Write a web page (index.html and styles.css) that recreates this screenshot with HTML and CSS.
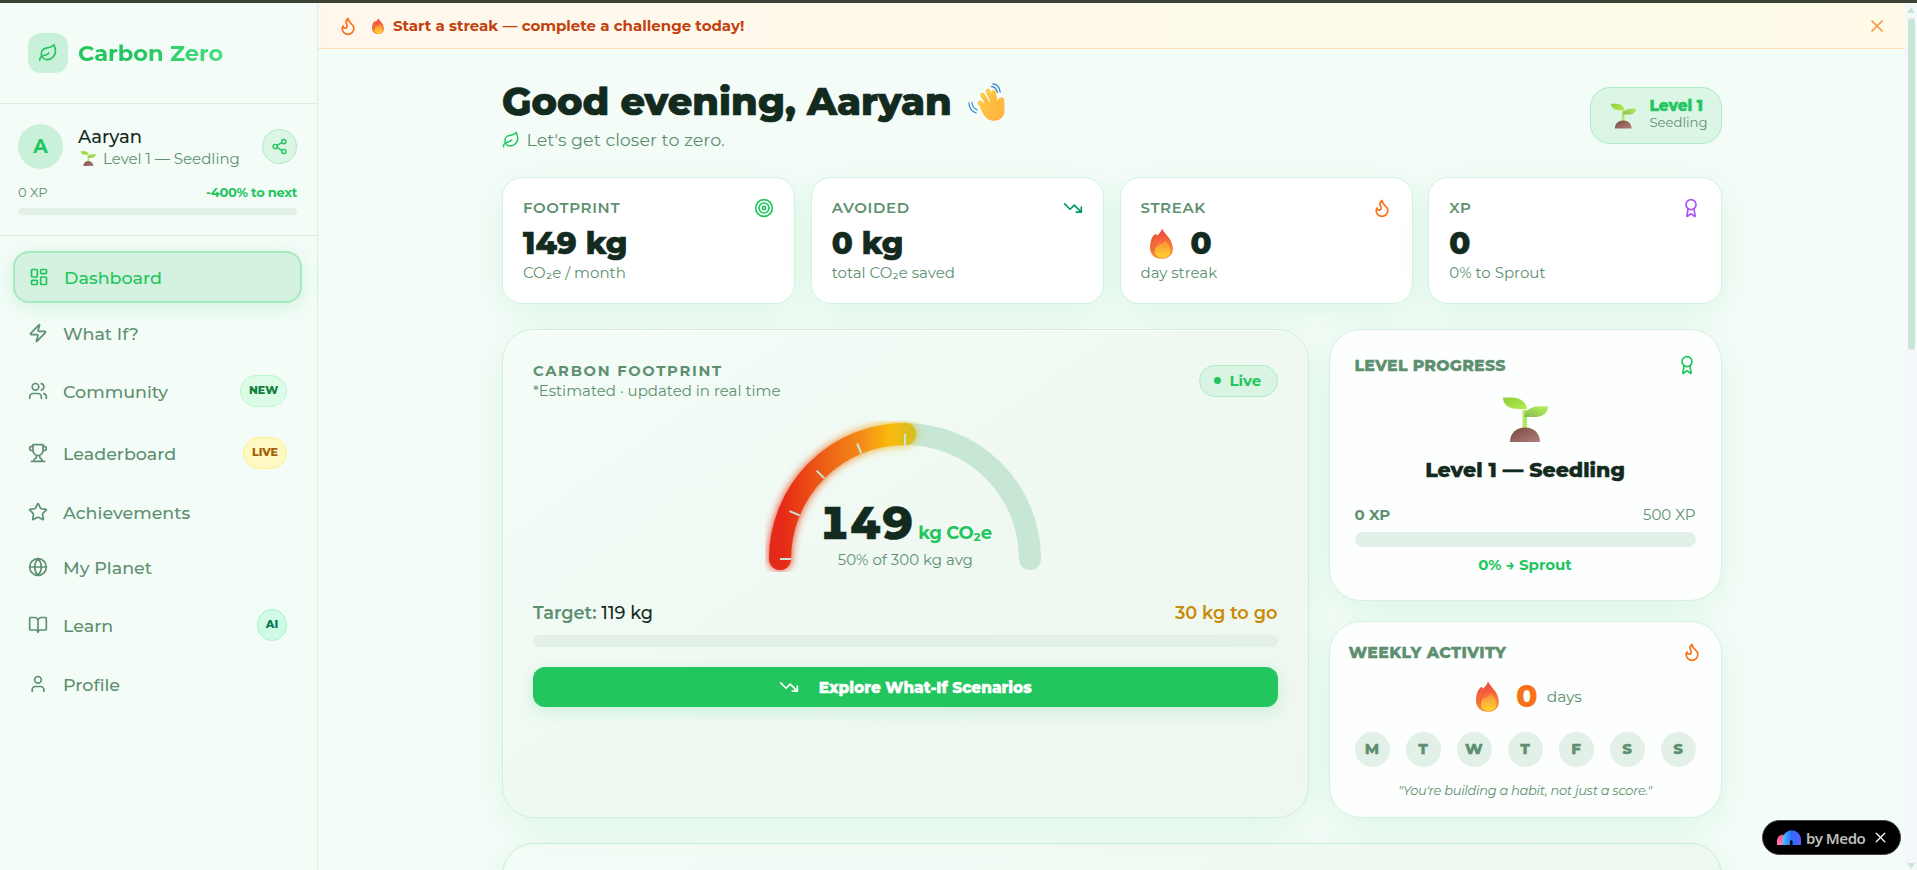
FILE: index.html
```html
<!DOCTYPE html>
<html lang="en">
<head>
<meta charset="utf-8">
<title>Carbon Zero</title>
<link rel="stylesheet" href="styles.css">
</head>
<body>
<svg class="defs" width="0" height="0" aria-hidden="true">
  <defs>
    <linearGradient id="leafA" x1="0" y1="0" x2="1" y2="1"><stop offset="0" stop-color="#8fce35"/><stop offset="1" stop-color="#b4ec55"/></linearGradient>
    <linearGradient id="leafB" x1="0" y1="1" x2="1" y2="0"><stop offset="0" stop-color="#86bb50"/><stop offset="1" stop-color="#b9f25c"/></linearGradient>
    <linearGradient id="soil" x1="0" y1="0" x2="1" y2="1"><stop offset="0" stop-color="#76483f"/><stop offset="1" stop-color="#b27f7b"/></linearGradient>
    <linearGradient id="fireA" x1="0" y1="0" x2="0" y2="1"><stop offset="0" stop-color="#ee3f3c"/><stop offset=".5" stop-color="#f9703c"/><stop offset="1" stop-color="#fb8f35"/></linearGradient>
    <linearGradient id="fireB" x1="0" y1="0" x2="0" y2="1"><stop offset="0" stop-color="#fb8a3a"/><stop offset="1" stop-color="#ffd62e"/></linearGradient>
    <linearGradient id="hand" gradientUnits="userSpaceOnUse" x1="8" y1="6" x2="34" y2="36"><stop offset="0" stop-color="#ffcf4a"/><stop offset="1" stop-color="#ffb23c"/></linearGradient>
  </defs>
  <symbol id="i-leaf" viewBox="0 0 24 24"><path d="M11 20A7 7 0 0 1 9.8 6.1C15.5 5 17 4.48 19 2c1 2 2 4.18 2 8 0 5.5-4.78 10-10 10Z"/><path d="M2 21c0-3 1.85-5.36 5.08-6C9.5 14.52 12 13 13 12"/></symbol>
  <symbol id="i-flame" viewBox="0 0 24 24"><path d="M8.5 14.5A2.5 2.5 0 0 0 11 12c0-1.38-.5-2-1-3-1.072-2.143-.224-4.054 2-6 .5 2.5 2 4.9 4 6.5 2 1.6 3 3.5 3 5.5a7 7 0 1 1-14 0c0-1.153.433-2.294 1-3a2.5 2.5 0 0 0 2.5 2.5z"/></symbol>
  <symbol id="i-x" viewBox="0 0 24 24"><path d="M18 6 6 18M6 6l12 12"/></symbol>
  <symbol id="i-share" viewBox="0 0 24 24"><circle cx="18" cy="5" r="3"/><circle cx="6" cy="12" r="3"/><circle cx="18" cy="19" r="3"/><path d="M8.59 13.51l6.83 3.98M15.41 6.51l-6.82 3.98"/></symbol>
  <symbol id="i-dash" viewBox="0 0 24 24"><rect width="7" height="9" x="3" y="3" rx="1"/><rect width="7" height="5" x="14" y="3" rx="1"/><rect width="7" height="9" x="14" y="12" rx="1"/><rect width="7" height="5" x="3" y="16" rx="1"/></symbol>
  <symbol id="i-zap" viewBox="0 0 24 24"><path d="M4 14a1 1 0 0 1-.78-1.63l9.9-10.2a.5.5 0 0 1 .86.46l-1.92 6.02A1 1 0 0 0 13 10h7a1 1 0 0 1 .78 1.63l-9.9 10.2a.5.5 0 0 1-.86-.46l1.92-6.02A1 1 0 0 0 11 14z"/></symbol>
  <symbol id="i-users" viewBox="0 0 24 24"><path d="M16 21v-2a4 4 0 0 0-4-4H6a4 4 0 0 0-4 4v2"/><circle cx="9" cy="7" r="4"/><path d="M22 21v-2a4 4 0 0 0-3-3.87M16 3.13a4 4 0 0 1 0 7.75"/></symbol>
  <symbol id="i-trophy" viewBox="0 0 24 24"><path d="M6 9H4.5a2.5 2.5 0 0 1 0-5H6M18 9h1.5a2.5 2.5 0 0 0 0-5H18M4 22h16M10 14.66V17c0 .55-.47.98-.97 1.21C7.85 18.75 7 20.24 7 22M14 14.66V17c0 .55.47.98.97 1.21C16.15 18.75 17 20.24 17 22M18 2H6v7a6 6 0 0 0 12 0V2Z"/></symbol>
  <symbol id="i-star" viewBox="0 0 24 24"><path d="M11.525 2.295a.53.53 0 0 1 .95 0l2.31 4.679a2.123 2.123 0 0 0 1.595 1.16l5.166.756a.53.53 0 0 1 .294.904l-3.736 3.638a2.123 2.123 0 0 0-.611 1.878l.882 5.14a.53.53 0 0 1-.771.56l-4.618-2.428a2.122 2.122 0 0 0-1.973 0L6.396 21.01a.53.53 0 0 1-.77-.56l.881-5.139a2.122 2.122 0 0 0-.611-1.879L2.16 9.795a.53.53 0 0 1 .294-.906l5.165-.755a2.122 2.122 0 0 0 1.597-1.16z"/></symbol>
  <symbol id="i-globe" viewBox="0 0 24 24"><circle cx="12" cy="12" r="10"/><path d="M12 2a14.5 14.5 0 0 0 0 20 14.5 14.5 0 0 0 0-20M2 12h20"/></symbol>
  <symbol id="i-book" viewBox="0 0 24 24"><path d="M12 7v14M3 18a1 1 0 0 1-1-1V4a1 1 0 0 1 1-1h5a4 4 0 0 1 4 4 4 4 0 0 1 4-4h5a1 1 0 0 1 1 1v13a1 1 0 0 1-1 1h-6a3 3 0 0 0-3 3 3 3 0 0 0-3-3z"/></symbol>
  <symbol id="i-user" viewBox="0 0 24 24"><path d="M19 21v-2a4 4 0 0 0-4-4H9a4 4 0 0 0-4 4v2"/><circle cx="12" cy="7" r="4"/></symbol>
  <symbol id="i-target" viewBox="0 0 24 24"><circle cx="12" cy="12" r="10"/><circle cx="12" cy="12" r="6"/><circle cx="12" cy="12" r="2"/></symbol>
  <symbol id="i-down" viewBox="0 0 24 24"><path d="m22 17-8.5-8.5-5 5L2 7M16 17h6v-6"/></symbol>
  <symbol id="i-award" viewBox="0 0 24 24"><path d="m15.477 12.89 1.515 8.526a.5.5 0 0 1-.81.47l-3.58-2.687a1 1 0 0 0-1.197 0l-3.586 2.686a.5.5 0 0 1-.81-.469l1.514-8.526"/><circle cx="12" cy="8" r="6"/></symbol>
  <symbol id="e-seedling" viewBox="0 0 45 45"><path d="M19.600 13h4.400v20h-4.400z" fill="#b4e862"/><path d="M0 .6h9C17.500 1 23 5 24 12h-9C6 12 0 8 0 .6z" fill="url(#leafA)"/><path d="M45 9.200h-8C28 9.500 21.200 13 21.200 20h9C39 20 45 17 45 9.200z" fill="url(#leafB)"/><path d="M7 45C7 36 13.500 30.600 22 30.600S37 36 37 45z" fill="url(#soil)"/></symbol>
  <symbol id="e-fire" viewBox="0 0 24 32"><path d="M12.500 0c1 5 10.500 9.500 11.300 20.500C24.300 28 19 32 12.500 32 6 32 0 28.500 0 20.500 0 14 1.800 8.500 5.500 6c1 0 1.500.8 2 1.800C9.500 5.500 12 3.500 12.500 0z" fill="url(#fireA)"/><path d="M4.500 9C2.200 13 1 18 2.500 24M10 10C5.500 14 4 19 4.500 25" fill="none" stroke="#d84a35" stroke-width=".9" opacity=".65"/><path d="M16.500 12.500c.4 2.500 5 5 5 10.500 0 5-3.500 8-8 8s-8.500-2.300-8.500-7.500c0-6 7.500-6.500 11.500-11z" fill="url(#fireB)"/></symbol>
  <symbol id="e-wave" viewBox="0 0 38 38"><g stroke="url(#hand)" stroke-linecap="round" fill="none"><path d="M12 20l9 10M14.500 12l9 14M20 8l7 15" stroke-width="4.600"/><path d="M25.500 9l3.500 15" stroke-width="4.300"/></g><path d="M10 20l20-2c.2-4 6-5.500 6.300-.5.3 5 0 8 .2 10.500.2 5-4 9.800-10.200 9.800-5.500 0-8-2.300-11-6.500z" fill="url(#hand)"/><path d="M15.500 14.500l6 9M19.500 10.500l5.500 10M24.500 11l3.500 9M30 25c-1-3 0-5.500 1.500-8" fill="none" stroke="#ee9635" stroke-width=".8" opacity=".6"/><g fill="none" stroke="#3c8fd6" stroke-width="1.300" stroke-linecap="round"><path d="M1 20c0 4.500 3 9 7 9.800M4 19.500c.3 3.500 1.800 6 5 7.300M25 1c4 0 6.500 3.500 7.200 8M23.500 3.500c3.500.2 5 2.500 6 6"/></g></symbol>
</svg>

<div class="topline"></div>
<div class="app">
  <aside class="side">
    <div class="brand">
      <span class="brand-mark"><svg class="ic s20"><use href="#i-leaf"/></svg></span>
      <span class="brand-name">Carbon Zero</span>
    </div>
    <div class="profile">
      <div class="who">
        <span class="avatar">A</span>
        <div class="who-text">
          <div class="who-name">Aaryan</div>
          <div class="who-level"><svg class="seed-xs"><use href="#e-seedling"/></svg><span>Level 1 — Seedling</span></div>
        </div>
        <span class="share"><svg class="ic s17"><use href="#i-share"/></svg></span>
      </div>
      <div class="xp-row"><span class="xp-now">0 XP</span><b class="xp-next">-400% to next</b></div>
      <div class="xp-bar"></div>
    </div>
    <nav class="nav">
      <a class="item active"><svg class="ic s20"><use href="#i-dash"/></svg><span>Dashboard</span></a>
      <a class="item"><svg class="ic s20"><use href="#i-zap"/></svg><span>What If?</span></a>
      <a class="item tall"><svg class="ic s20"><use href="#i-users"/></svg><span>Community</span><i class="tag new">NEW</i></a>
      <a class="item tall"><svg class="ic s20"><use href="#i-trophy"/></svg><span>Leaderboard</span><i class="tag live">LIVE</i></a>
      <a class="item"><svg class="ic s20"><use href="#i-star"/></svg><span>Achievements</span></a>
      <a class="item"><svg class="ic s20"><use href="#i-globe"/></svg><span>My Planet</span></a>
      <a class="item tall"><svg class="ic s20"><use href="#i-book"/></svg><span>Learn</span><i class="tag ai">AI</i></a>
      <a class="item"><svg class="ic s20"><use href="#i-user"/></svg><span>Profile</span></a>
    </nav>
  </aside>

  <div class="main">
    <div class="banner">
      <svg class="ic s20 orange"><use href="#i-flame"/></svg>
      <svg class="fire-xs"><use href="#e-fire"/></svg>
      <b class="banner-text">Start a streak — complete a challenge today!</b>
      <svg class="ic s20 banner-x"><use href="#i-x"/></svg>
    </div>
    <div class="content">
      <header class="head">
        <div>
          <h1 class="hello"><span>Good evening, Aaryan</span><svg class="wave"><use href="#e-wave"/></svg></h1>
          <p class="sub"><svg class="ic s18 green"><use href="#i-leaf"/></svg><span>Let's get closer to zero.</span></p>
        </div>
        <div class="rank"><svg class="seed-sm"><use href="#e-seedling"/></svg><div><b class="rank-lv">Level 1</b><span class="rank-nm">Seedling</span></div></div>
      </header>

      <section class="stats">
        <div class="stat"><div class="stat-top"><span>FOOTPRINT</span><svg class="ic s20 green"><use href="#i-target"/></svg></div><div class="val">149 kg</div><div class="note">CO₂e / month</div></div>
        <div class="stat"><div class="stat-top"><span>AVOIDED</span><svg class="ic s20 teal"><use href="#i-down"/></svg></div><div class="val">0 kg</div><div class="note">total CO₂e saved</div></div>
        <div class="stat"><div class="stat-top"><span>STREAK</span><svg class="ic s20 orange"><use href="#i-flame"/></svg></div><div class="val"><svg class="fire-md"><use href="#e-fire"/></svg>0</div><div class="note">day streak</div></div>
        <div class="stat"><div class="stat-top"><span>XP</span><svg class="ic s20 purple"><use href="#i-award"/></svg></div><div class="val">0</div><div class="note">0% to Sprout</div></div>
      </section>

      <section class="panels">
        <div class="carbon">
          <div class="carbon-head">
            <div><div class="carbon-title">CARBON FOOTPRINT</div><div class="carbon-sub">*Estimated · updated in real time</div></div>
            <span class="pill"><i class="dot"></i>Live</span>
          </div>
          <div class="gauge">
            <svg class="gauge-arc" width="280" height="151" viewBox="765 421 280 151">
              <defs>
                <linearGradient id="heat" gradientUnits="userSpaceOnUse" x1="765" y1="0" x2="925" y2="0">
                  <stop offset="0" stop-color="#e4271c"/><stop offset=".13" stop-color="#e62d19"/><stop offset=".2" stop-color="#e93c16"/><stop offset=".42" stop-color="#ee6917"/><stop offset=".6" stop-color="#f48a16"/><stop offset=".78" stop-color="#fbbb0e"/><stop offset=".84" stop-color="#eebc14"/><stop offset=".96" stop-color="#cdbf24"/>
                </linearGradient>
                <filter id="glow" filterUnits="userSpaceOnUse" x="745" y="400" width="200" height="200"><feGaussianBlur stdDeviation="4" result="b"/><feMerge><feMergeNode in="b"/><feMergeNode in="SourceGraphic"/></feMerge></filter>
              </defs>
              <g fill="none" stroke-width="22" stroke-linecap="round">
                <path d="M780 559A125 125 0 0 1 1030 559" stroke="#c8e6d4"/>
                <path d="M780 559A125 125 0 0 1 905 434" stroke="url(#heat)" filter="url(#glow)"/>
              </g>
              <path d="M780 559h11M789.500 511.200l10.200 4.200M816.600 470.600l7.800 7.800M857.200 443.500l4.200 10.200M905 434v11" fill="none" stroke="#c8e6d4" stroke-width="2"/>
            </svg>
            <div class="gauge-text"><div class="reading"><b class="num">149</b><span class="unit">kg CO₂e</span></div><div class="avg">50% of 300 kg avg</div></div>
          </div>
          <div class="goal"><span>Target: <em>119 kg</em></span><span class="togo">30 kg to go</span></div>
          <div class="goal-bar"></div>
          <div class="cta"><svg class="ic s20"><use href="#i-down"/></svg><b>Explore What-If Scenarios</b></div>
        </div>

        <div class="rail">
          <div class="progress">
            <div class="rail-head"><b>LEVEL PROGRESS</b><svg class="ic s20 green"><use href="#i-award"/></svg></div>
            <svg class="seed-lg"><use href="#e-seedling"/></svg>
            <div class="lv">Level 1 — Seedling</div>
            <div class="lv-row"><b>0 XP</b><span>500 XP</span></div>
            <div class="lv-bar"></div>
            <div class="lv-next">0% → Sprout</div>
          </div>
          <div class="weekly">
            <div class="rail-head"><b>WEEKLY ACTIVITY</b><svg class="ic s20 orange"><use href="#i-flame"/></svg></div>
            <div class="days"><svg class="fire-md2"><use href="#e-fire"/></svg><b>0</b><span>days</span></div>
            <div class="week"><i>M</i><i>T</i><i>W</i><i>T</i><i>F</i><i>S</i><i>S</i></div>
            <div class="quote">"You're building a habit, not just a score."</div>
          </div>
        </div>
      </section>
      <section class="next"></section>
    </div>
  </div>

  <div class="scroll"><i class="up"></i><i class="thumb"></i><i class="down"></i></div>
</div>

<div class="medo">
  <svg width="24" height="15" viewBox="0 0 24 15"><defs><linearGradient id="m1" x1="0" y1="0" x2="1" y2="0"><stop offset="0" stop-color="#4cc3ff"/><stop offset=".5" stop-color="#2b6bff"/><stop offset="1" stop-color="#5b5cff"/></linearGradient><linearGradient id="m2" x1="0" y1="0" x2="0" y2="1"><stop offset="0" stop-color="#ff4f8b"/><stop offset="1" stop-color="#ff7eb6"/></linearGradient></defs><path d="M0 15v-4a6 6 0 0 1 8-6v10z" fill="url(#m2)"/><path d="M5.500 15V9.500a9.200 9.200 0 0 1 18.500 0V15h-8.500v-3.500a1.200 1.200 0 0 0-2.400 0V15z" fill="url(#m1)"/></svg>
  <span>by Medo</span>
  <svg class="ic medo-x"><use href="#i-x"/></svg>
</div>
</body>
</html>
```
FILE: styles.css
```css
* { box-sizing: border-box; }
html, body { margin: 0; height: 870px; overflow: hidden; }
body { background: #f4fcf8; font-family: Montserrat, Inter, sans-serif; color: #5d8f70; }
h1, p { margin: 0; }
i, em { font-style: normal; }
svg { display: block; flex: none; }
.defs { position: absolute; }
.ic { fill: none; stroke: currentColor; stroke-width: 2; stroke-linecap: round; stroke-linejoin: round; }
.s17 { width: 17px; height: 17px; }
.s18 { width: 18px; height: 18px; }
.s20 { width: 20px; height: 20px; }
.green { color: #22c55e; }
.teal { color: #059669; }
.orange { color: #f97316; }
.purple { color: #a855f7; }

.topline { height: 3px; background: #3b4336; }
.app { display: flex; height: 867px; }

.side { width: 318px; flex: none; border-right: 1px solid #d8efe2; }
.brand { height: 101px; padding: 30px 28px; display: flex; gap: 10px; border-bottom: 1px solid #d8efe2; }
.brand-mark { width: 40px; height: 40px; border-radius: 13px; background: #c9f1d9; color: #22c55e; display: grid; place-items: center; }
.brand-name { font-size: 22.500px; line-height: 40px; font-weight: 700; background: linear-gradient(90deg, #22c55e 40%, #4ade80); -webkit-background-clip: text; background-clip: text; color: transparent; }
.profile { height: 132px; padding: 20px 20px 0 18px; border-bottom: 1px solid #d8efe2; }
.who { display: flex; align-items: center; height: 45px; }
.avatar { width: 45px; height: 45px; border-radius: 50%; background: #c9f1d9; color: #22c55e; font-weight: 700; font-size: 19px; display: grid; place-items: center; }
.who-text { margin-left: 15px; flex: 1; padding-top: 2px; }
.who-name { font-size: 18px; font-weight: 550; line-height: 22px; color: #132a1e; }
.who-level { display: flex; align-items: center; font-size: 15px; line-height: 22px; font-weight: 400; gap: 7px; padding-left: 3px; white-space: nowrap; }
.seed-xs { width: 15px; height: 15px; }
.share { width: 35px; height: 35px; border-radius: 50%; border: 1px solid #b0ebc6; background: #dcf6e6; color: #22c55e; display: grid; place-items: center; }
.xp-row { display: flex; justify-content: space-between; font-size: 13px; line-height: 20px; margin-top: 13px; }
.xp-next { color: #22c55e; font-weight: 700; font-size: 13px; letter-spacing: -.3px; }
.xp-bar { height: 7px; border-radius: 4px; background: #e3f0e7; margin-top: 6px; }

.nav { padding: 15px 15px 0 13px; display: flex; flex-direction: column; gap: 4px; }
.item { display: flex; align-items: center; height: 51px; padding: 0 15px; gap: 15px; font-size: 17.500px; font-weight: 500; border-radius: 16px; }
.item span { flex: 1; padding-top: 1px; }
.item.tall { height: 58px; }
.item.active { height: 52px; padding-left: 14px; border: 2px solid #a5e9be; background: #d4f2df; color: #22c55e; box-shadow: 0 4px 20px rgba(34,197,94,.16); }
.tag { height: 32px; border-radius: 16px; padding: 0 8px; border: 1px solid; font-size: 11px; font-weight: 850; line-height: 29px; letter-spacing: 0; text-align: center; }
.new { width: 47px; color: #15803d; background: #dcfce7; border-color: #bbf7d0; }
.live { width: 44px; color: #a16207; background: #fef9c3; border-color: #fef08a; }
.ai { width: 30px; color: #047857; background: #d1fae5; border-color: #a7f3d0; padding: 0; }

.main { flex: 1; min-width: 0; overflow: hidden; }
.banner { height: 46px; display: flex; align-items: center; padding: 0 18px 0 20px; background: linear-gradient(90deg, #fff7ed, #fffbeb 60%, #fffbe8); border-bottom: 1px solid #fee0b8; }
.fire-xs { width: 12px; height: 16px; margin-left: 14px; }
.banner-text { flex: 1; margin-left: 9px; color: #c2410c; font-size: 15px; font-weight: 700; }
.banner-x { color: #fb923c; width: 20px; }
.content { width: 1219.500px; margin-left: 184px; padding-top: 31px; }
.head { display: flex; justify-content: space-between; height: 76px; }
.hello { display: flex; align-items: center; gap: 16px; font-size: 38.300px; line-height: 44px; font-weight: 800; color: #132a1e; -webkit-text-stroke: .7px #132a1e; }
.wave { width: 38px; height: 38px; }
.sub { display: flex; align-items: center; gap: 6.500px; font-size: 17.550px; line-height: 32px; font-weight: 400; }
.rank { margin-top: 7px; width: 132px; height: 57px; border-radius: 20px; border: 1px solid #b0ebc6; background: #dcf6e6; display: flex; align-items: center; padding-left: 20px; gap: 14px; }
.seed-sm { width: 25px; height: 26px; }
.rank-lv { display: block; color: #22c55e; font-size: 15.300px; font-weight: 850; line-height: 16px; -webkit-text-stroke: .4px #22c55e; }
.rank-nm { display: block; font-size: 13.200px; font-weight: 400; line-height: 16px; margin-bottom: 3px; }

.stats { display: grid; grid-template-columns: repeat(4, 1fr); gap: 15.500px; margin-top: 21px; }
.stat { height: 127px; padding: 20px; background: #fff; border: 1px solid #d3f3df; border-radius: 20px; box-shadow: 0 8px 32px rgba(34,197,94,.11); }
.stat-top { display: flex; justify-content: space-between; align-items: center; height: 20px; font-size: 15px; line-height: 19px; font-weight: 650; letter-spacing: .65px; }
.stat-top span { padding-bottom: 1px; }
.val { display: flex; align-items: center; height: 36px; margin-top: 7px; font-size: 30.700px; font-weight: 800; color: #132a1e; -webkit-text-stroke: .6px #132a1e; }
.fire-md { width: 23px; height: 31px; margin: 0 18px 0 9px; }
.note { font-size: 15px; line-height: 20px; margin-top: 2px; font-weight: 400; }

.panels { display: grid; grid-template-columns: 1fr 393px; gap: 20px; margin-top: 25px; height: 489px; }
.carbon { padding: 30px; border: 1px solid #d3ecdd; border-radius: 32px; background: linear-gradient(145deg, #f4fdf8, #eff9f2 50%, #eef7f0); box-shadow: 0 8px 32px rgba(34,197,94,.11), inset 0 1px 0 rgba(255,255,255,.8); }
.carbon-head { display: flex; justify-content: space-between; align-items: center; height: 41px; }
.carbon-title { font-size: 14.700px; line-height: 20px; font-weight: 700; letter-spacing: 1.720px; }
.carbon-sub { font-size: 15px; line-height: 20px; font-weight: 400; }
.pill { width: 79px; height: 32px; border-radius: 16px; border: 1px solid #b0ebc6; background: #daf4e4; color: #22c55e; display: flex; align-items: center; gap: 9px; padding-left: 14px; font-size: 15px; font-weight: 700; }
.dot { width: 7px; height: 7px; border-radius: 50%; background: #22c55e; }
.gauge { width: 280px; margin: 20px auto 0; display: grid; }
.gauge > * { grid-area: 1 / 1; }
.gauge-text { align-self: end; text-align: center; }
.reading { display: flex; align-items: baseline; justify-content: center; gap: 5px; height: 51px; }
.num { font-size: 45px; line-height: 52px; font-weight: 850; font-variant-numeric: tabular-nums; color: #132a1e; -webkit-text-stroke: .5px #132a1e; }
.unit { font-size: 18px; font-weight: 700; color: #22c55e; letter-spacing: -.3px; }
.avg { font-size: 15px; line-height: 24px; font-weight: 400; }
.goal { display: flex; justify-content: space-between; margin-top: 29px; font-size: 17.750px; line-height: 24px; font-weight: 600; }
.goal em { color: #132a1e; font-weight: 550; }
.togo { color: #ca8a04; }
.goal-bar { height: 12px; border-radius: 6px; background: #e3f0e7; margin-top: 10px; }
.cta { height: 40px; border-radius: 12px; background: #22c55e; color: #fff; margin-top: 20px; display: flex; align-items: center; justify-content: center; gap: 20px; font-size: 15.350px; box-shadow: 0 4px 16px rgba(34,197,94,.18); }
.cta b { font-weight: 850; -webkit-text-stroke: .4px #fff; }

.rail { display: flex; flex-direction: column; gap: 20px; }
.progress, .weekly { background: #fcfffd; border: 1px solid #d8f0e1; border-radius: 32px; box-shadow: 0 8px 32px rgba(34,197,94,.11); }
.progress { height: 272px; padding: 25px; display: flex; flex-direction: column; }
.rail-head { display: flex; justify-content: space-between; align-items: center; height: 20px; font-size: 15.750px; letter-spacing: .25px; }
.rail-head b { font-weight: 800; -webkit-text-stroke: .3px #5d8f70; }
.weekly .rail-head { letter-spacing: .4px; }
.progress .rail-head svg { margin-right: -1px; }
.seed-lg { width: 45px; height: 45px; align-self: center; margin-top: 22px; }
.lv { text-align: center; font-size: 20.500px; line-height: 26px; font-weight: 800; color: #132a1e; margin-top: 15px; -webkit-text-stroke: .4px #132a1e; }
.lv-row { display: flex; justify-content: space-between; font-size: 15px; line-height: 20px; margin-top: 22px; font-weight: 400; }
.lv-row b { font-weight: 700; }
.lv-bar { height: 15px; border-radius: 8px; background: #e3f0e7; margin-top: 7px; }
.lv-next { text-align: center; color: #22c55e; font-size: 15px; line-height: 20px; font-weight: 700; margin-top: 8px; }
.weekly { height: 197px; padding: 20px 19px; }
.days { display: flex; align-items: center; justify-content: center; height: 32px; margin-top: 18px; padding-left: 8px; font-size: 15.500px; }
.fire-md2 { width: 23px; height: 31px; }
.days b { font-size: 31.500px; font-weight: 850; color: #f97316; margin: 0 9px 0 17px; }
.days span { font-weight: 400; }
.week { display: flex; justify-content: space-between; padding: 0 6px; margin-top: 20px; }
.week i { width: 35px; height: 35px; border-radius: 50%; background: #e3f0e7; font-size: 15px; font-weight: 850; line-height: 34px; text-align: center; -webkit-text-stroke: .3px #5d8f70; }
.quote { text-align: center; font-style: italic; font-size: 13px; line-height: 20px; margin-top: 13px; font-weight: 400; letter-spacing: -.3px; }
.next { height: 120px; margin-top: 25px; border: 1px solid #c6efd5; border-radius: 32px; background: linear-gradient(145deg, #f3fcf7, #edf8f0); box-shadow: 0 8px 32px rgba(34,197,94,.11); }

.scroll { width: 12px; flex: none; background: #f5f8fb; display: flex; flex-direction: column; align-items: center; }
.up { border: 4px solid transparent; border-top: 0; border-bottom: 6px solid #c8e6d4; margin: 4px 0 5px; }
.thumb { width: 7px; height: 332px; border-radius: 4px; background: #c8e6d4; margin-left: 1px; }
.down { border: 4px solid transparent; border-bottom: 0; border-top: 6px solid #c8e6d4; margin-top: auto; margin-bottom: 1px; }

.medo { position: absolute; right: 16px; bottom: 15px; width: 139px; height: 35px; border-radius: 18px; background: #000; border: 1px solid #444; display: flex; align-items: center; padding-left: 14px; color: #bdbdbd; font: 600 15px "Noto Sans", sans-serif; }
.medo span { margin-left: 5px; width: 62px; white-space: nowrap; letter-spacing: -.45px; }
.medo-x { width: 17px; height: 17px; margin-left: 4px; color: #fff; stroke-width: 1.800; }
```
